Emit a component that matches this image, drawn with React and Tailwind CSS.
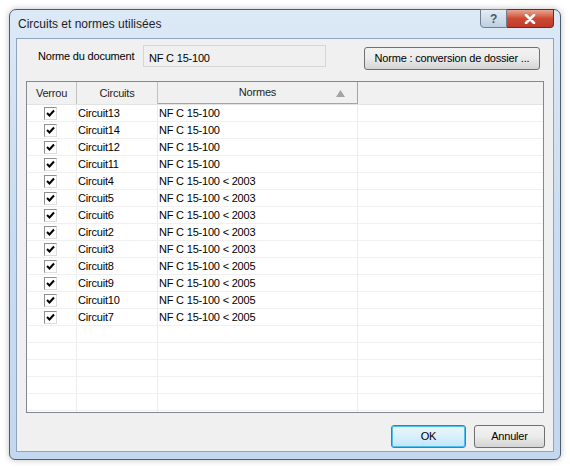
import React from "react";

const rows = [
  ["Circuit13", "NF C 15-100"],
  ["Circuit14", "NF C 15-100"],
  ["Circuit12", "NF C 15-100"],
  ["Circuit11", "NF C 15-100"],
  ["Circuit4", "NF C 15-100 < 2003"],
  ["Circuit5", "NF C 15-100 < 2003"],
  ["Circuit6", "NF C 15-100 < 2003"],
  ["Circuit2", "NF C 15-100 < 2003"],
  ["Circuit3", "NF C 15-100 < 2003"],
  ["Circuit8", "NF C 15-100 < 2005"],
  ["Circuit9", "NF C 15-100 < 2005"],
  ["Circuit10", "NF C 15-100 < 2005"],
  ["Circuit7", "NF C 15-100 < 2005"],
];

function Check() {
  return (
    <div className="w-[13px] h-[13px] border border-[#8e8f8f] border-r-[#dcdcdc] border-b-[#dcdcdc] bg-white flex items-center justify-center">
      <svg width="9" height="9" viewBox="0 0 9 9">
        <path d="M1 4 L3.5 6.5 L8 1.5" stroke="#000" strokeWidth="2" fill="none" />
      </svg>
    </div>
  );
}

function Row({ data }) {
  return (
    <div className="flex h-[17px] border-b border-[#f0f0f0] shrink-0">
      <div className="w-[50px] border-r border-[#ececec] flex items-center justify-center pr-[3px]">
        {data && <Check />}
      </div>
      <div className="w-[81px] border-r border-[#ececec] pl-[1px] pt-[1px] flex items-center">{data ? data[0] : ""}</div>
      <div className="w-[200px] border-r border-[#ececec] pl-[1px] pt-[1px] flex items-center">{data ? data[1] : ""}</div>
      <div className="flex-1" />
    </div>
  );
}

export default function App() {
  const empties = [0, 1, 2, 3, 4, 5];
  return (
    <div
      className="w-[570px] h-[470px] bg-white pl-[9px] pt-[9px] text-[11px] tracking-[-0.2px] text-black"
      style={{ fontFamily: '"Liberation Sans", Arial, sans-serif' }}
    >
      <div className="w-[552px] h-[451px] rounded-t-[7px] rounded-b-[6px] border border-[#4f5d6c] bg-gradient-to-b from-[#dce9f7] via-[#c9dcf1] to-[#c3d8ee] flex flex-col shadow-[0_0_6px_rgba(0,0,0,0.25)]">
        {/* Title bar */}
        <div className="h-[28px] flex items-start shrink-0 relative">
          <div className="pl-[8px] pt-[5px] text-[12px] tracking-normal text-[#1e1e1e]">Circuits et normes utilisées</div>
          <div className="absolute right-[6px] top-[-1px] flex">
            <div className="w-[27px] h-[19px] border border-[#6f7f90] rounded-bl-[4px] bg-gradient-to-b from-[#e4ecf5] to-[#bfcfe0] flex items-center justify-center text-[12px] font-bold text-[#4a5868]">
              ?
            </div>
            <div className="w-[47px] h-[19px] border border-l-0 border-[#6e2a22] rounded-br-[4px] bg-gradient-to-b from-[#e8a493] via-[#cc4b32] to-[#c0392b] flex items-center justify-center">
              <svg width="12" height="10" viewBox="0 0 12 10">
                <path d="M2 1 L10 9 M10 1 L2 9" stroke="#fff" strokeWidth="2.6" strokeLinecap="round" />
              </svg>
            </div>
          </div>
        </div>
        {/* Content */}
        <div className="mx-[6px] h-[414px] border border-[#8fa5bd] bg-[#f0f0f0] flex flex-col relative">
          {/* top row */}
          <div className="flex items-start h-[42px] shrink-0">
            <div className="pl-[21px] pt-[9px] w-[126px]">Norme du document</div>
            <div className="mt-[6px] w-[183px] h-[22px] border border-[#d6d6d6] bg-[#f0f0f0] pl-[5px] pt-[4px]">NF C 15-100</div>
            <div className="ml-[38px] mt-[8px] w-[176px] h-[23px] rounded-[3px] border border-[#707070] bg-gradient-to-b from-[#f2f2f2] via-[#ebebeb] to-[#d4d4d4] flex items-center justify-center">
              Norme : conversion de dossier ...
            </div>
          </div>
          {/* list */}
          <div className="ml-[9px] w-[518px] h-[332px] border border-[#828790] bg-white flex flex-col overflow-hidden">
            <div className="flex h-[23px] shrink-0 bg-[#f1f1f1] border-b border-[#e3e3e3]">
              <div className="w-[50px] border-r border-[#c0c0c0] flex items-center justify-center text-[#1e1e1e]">Verrou</div>
              <div className="w-[81px] border-r border-[#c0c0c0] flex items-center justify-center text-[#1e1e1e]">Circuits</div>
              <div className="w-[200px] border-r border-b border-[#a5a5a5] flex items-center justify-center relative text-[#1e1e1e] bg-[#f0f0f0]">
                Normes
                <svg className="absolute right-[12px] top-[8px]" width="9" height="7" viewBox="0 0 9 7">
                  <path d="M4.5 0 L9 7 L0 7 Z" fill="#a3a3a3" />
                </svg>
              </div>
              <div className="flex-1" />
            </div>
            {rows.map((r) => (
              <Row key={r[0]} data={r} />
            ))}
            {empties.map((i) => (
              <Row key={i} />
            ))}
          </div>
          {/* buttons */}
          <div className="flex justify-end gap-[8px] mt-[12px] mr-[8px]">
            <div className="w-[75px] h-[23px] rounded-[3px] border border-[#3c7fb1] bg-gradient-to-b from-[#eaf6fd] via-[#d9effc] to-[#bee6fd] shadow-[inset_0_0_0_1px_#4fc1f0] flex items-center justify-center">
              OK
            </div>
            <div className="w-[71px] h-[23px] rounded-[3px] border border-[#707070] bg-gradient-to-b from-[#f2f2f2] via-[#ebebeb] to-[#d4d4d4] flex items-center justify-center">
              Annuler
            </div>
          </div>
        </div>
      </div>
    </div>
  );
}
